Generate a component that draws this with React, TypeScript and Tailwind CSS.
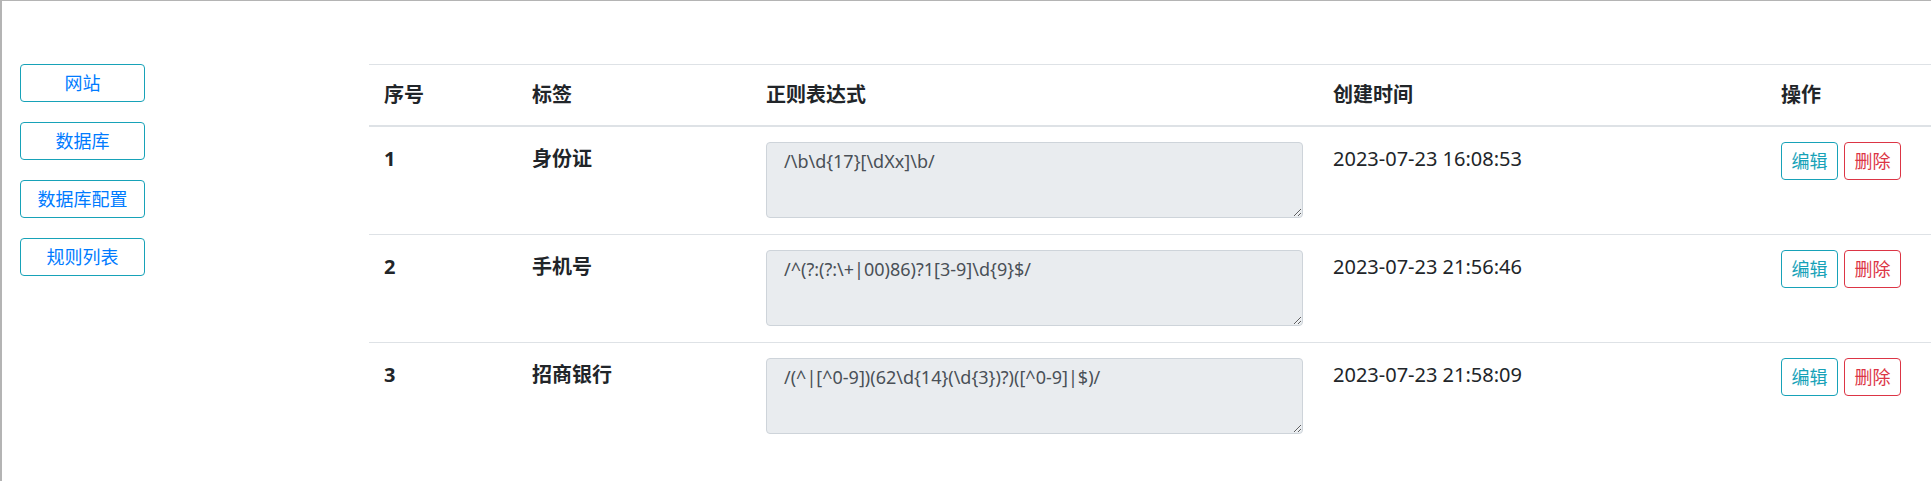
import React from "react";

type Rule = {
  id: number;
  label: string;
  pattern: string;
  createdAt: string;
};

const navItems = ["网站", "数据库", "数据库配置", "规则列表"];

const rules: Rule[] = [
  { id: 1, label: "身份证", pattern: "/\\b\\d{17}[\\dXx]\\b/", createdAt: "2023-07-23 16:08:53" },
  { id: 2, label: "手机号", pattern: "/^(?:(?:\\+|00)86)?1[3-9]\\d{9}$/", createdAt: "2023-07-23 21:56:46" },
  { id: 3, label: "招商银行", pattern: "/(^|[^0-9])(62\\d{14}(\\d{3})?)([^0-9]|$)/", createdAt: "2023-07-23 21:58:09" },
];

const font = { fontFamily: '"Noto Sans", "Noto Sans CJK SC", sans-serif' };

export default function App() {
  return (
    <div
      className="flex h-[481px] w-full overflow-hidden border-t border-l-2 border-[#b4b4b4] bg-white text-[18px] text-[#212529]"
      style={font}
    >
      <aside className="flex w-[367px] shrink-0 flex-col gap-[20px] pl-[18px] pt-[63px]">
        {navItems.map((item) => (
          <a
            key={item}
            href="#"
            className="flex h-[38px] w-[125px] items-center justify-center rounded border border-[#17a2b8] text-[18px] text-[#007bff]"
          >
            {item}
          </a>
        ))}
      </aside>

      <div className="flex-1 pt-[63px]">
        <table className="w-full border-collapse text-left">
          <thead>
            <tr className="border-t border-b-2 border-[#dee2e6] text-[20px]">
              <th className="w-[148px] px-[15px] py-[15px] leading-[30px] font-bold">序号</th>
              <th className="w-[234px] px-[15px] py-[15px] leading-[30px] font-bold">标签</th>
              <th className="w-[566px] px-[15px] py-[15px] leading-[30px] font-bold">正则表达式</th>
              <th className="w-[448px] px-[15px] py-[15px] leading-[30px] font-bold">创建时间</th>
              <th className="px-[15px] py-[15px] leading-[30px] font-bold">操作</th>
            </tr>
          </thead>
          <tbody>
            {rules.map((rule) => (
              <tr key={rule.id} className="border-t border-[#dee2e6] align-top">
                <td className="px-[15px] pt-[15px] pb-[16px] text-[20px] leading-[34px] font-bold">{rule.id}</td>
                <td className="px-[15px] pt-[15px] pb-[16px] text-[20px] leading-[34px] font-bold">{rule.label}</td>
                <td className="px-[15px] pt-[15px] pb-[16px]">
                  <textarea
                    readOnly
                    value={rule.pattern}
                    className="block h-[76px] w-[537px] resize-y rounded border border-[#ced4da] bg-[#e9ecef] pr-[16px] pl-[17px] py-[5px] text-[18px] leading-[27px] text-[#495057]"
                    style={font}
                  />
                </td>
                <td className="px-[15px] pt-[15px] pb-[16px] text-[20px] leading-[34px]">{rule.createdAt}</td>
                <td className="px-[15px] pt-[15px] pb-[16px]">
                  <div className="flex gap-[6px]">
                    <button className="h-[38px] w-[57px] rounded border border-[#17a2b8] text-[18px] text-[#17a2b8]">编辑</button>
                    <button className="h-[38px] w-[57px] rounded border border-[#dc3545] text-[18px] text-[#dc3545]">删除</button>
                  </div>
                </td>
              </tr>
            ))}
          </tbody>
        </table>
      </div>
    </div>
  );
}
